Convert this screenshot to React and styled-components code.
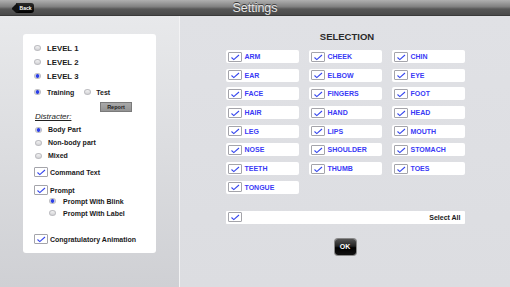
import React from "react";
import styled, { createGlobalStyle } from "styled-components";

const Global = createGlobalStyle`
  html, body { margin: 0; padding: 0; }
  body { font-family: "Liberation Sans", Arial, sans-serif; background: #dfe0e4; }
`;

const Page = styled.div`
  width: 510px;
  height: 287px;
  display: flex;
  flex-direction: column;
  overflow: hidden;
`;

const Header = styled.header`
  height: 16px;
  display: grid;
  grid-template-columns: 1fr auto 1fr;
  align-items: center;
  background: linear-gradient(#b0b0b0 0%, #808080 45%, #575757 60%, #4a4a4a 100%);
  border-bottom: 1px solid #3a3a3a;
  box-sizing: border-box;
`;

const BackButton = styled.div`
  position: relative;
  justify-self: start;
  margin-left: 16px;
  width: 18px;
  height: 10px;
  background: linear-gradient(#2a2a2a, #000);
  border-radius: 0 3px 3px 0;
  color: #fff;
  font-size: 5px;
  font-weight: bold;
  display: flex;
  align-items: center;
  justify-content: center;
  padding-left: 1px;
  box-sizing: border-box;
  &::before {
    content: "";
    position: absolute;
    left: -3px;
    top: 1.5px;
    width: 7px;
    height: 7px;
    background: #111;
    transform: rotate(45deg);
    border-radius: 1px;
    z-index: 0;
  }
  span { position: relative; z-index: 1; }
`;

const Title = styled.h1`
  margin: 0;
  font-size: 12.5px;
  font-weight: normal;
  color: #e8e8e8;
  text-shadow: 0 -1px 0 #333;
  line-height: 16px;
`;

const Main = styled.main`
  flex: 1;
  display: flex;
`;

const LeftPane = styled.section`
  width: 180px;
  box-sizing: border-box;
  padding: 18px 0 0 23px;
  background: linear-gradient(#e8e9eb, #cfd0d4);
  border-right: 1px solid #f3f3f4;
`;

const Card = styled.div`
  width: 133px;
  height: 219px;
  box-sizing: border-box;
  background: #fff;
  border-radius: 3px;
  padding: 7px 0 0 11px;
  display: flex;
  flex-direction: column;
`;

const Row = styled.div`
  display: flex;
  align-items: center;
  height: ${(p) => p.$h || 14}px;
  margin-top: ${(p) => p.$mt || 0}px;
  padding-left: ${(p) => p.$indent || 0}px;
  gap: ${(p) => p.$gap ?? 6}px;
`;

const Label = styled.span`
  font-size: ${(p) => p.$size || 7}px;
  font-weight: bold;
  color: #1a1a1a;
  white-space: nowrap;
`;

const RadioDot = styled.span`
  width: 7px;
  height: 6px;
  border-radius: 50%;
  box-sizing: border-box;
  border: 1px solid #bdbdc1;
  background: ${(p) =>
    p.$on
      ? "radial-gradient(circle, #2c3fe8 0 1.6px, #e8ecf8 2.2px)"
      : "linear-gradient(#f4f4f4, #d3d3d6)"};
  flex-shrink: 0;
`;

const ReportButton = styled.div`
  margin-left: 66px;
  width: 32px;
  height: 10px;
  box-sizing: border-box;
  background: linear-gradient(#a9a9a9, #939393);
  border: 1px solid #7a7a7a;
  font-size: 5.5px;
  font-weight: bold;
  color: #222;
  display: flex;
  align-items: center;
  justify-content: center;
`;

const Distracter = styled.span`
  font-size: 8px;
  font-style: italic;
  text-decoration: underline;
  color: #222;
`;

const BoxFrame = styled.span`
  width: 14px;
  height: 10px;
  box-sizing: border-box;
  border: 1px solid #a4a4aa;
  border-radius: 1px;
  background: #fff;
  display: flex;
  align-items: center;
  justify-content: center;
  flex-shrink: 0;
`;

const CheckBox = () => (
  <BoxFrame>
    <svg width="12" height="8" viewBox="0 0 12 8">
      <path d="M2.5 4.5 L4.8 6.6 L10 2" fill="none" stroke="#3344ee" strokeWidth="1.1" />
    </svg>
  </BoxFrame>
);

const RightPane = styled.section`
  flex: 1;
  display: flex;
  flex-direction: column;
  align-items: center;
  padding-top: 15px;
  background: linear-gradient(#e0e1e5, #dcdde1);
`;

const Heading = styled.h2`
  margin: 0;
  font-size: 9.5px;
  line-height: 12px;
  font-weight: bold;
  color: #2a2a2a;
  margin-left: 4px;
`;

const Grid = styled.div`
  margin-top: 7px;
  display: grid;
  grid-template-columns: repeat(3, 73px);
  grid-auto-rows: 13px;
  column-gap: 10px;
  row-gap: 5.7px;
`;

const Cell = styled.div`
  display: flex;
  align-items: center;
  gap: 3px;
  background: #fff;
  border-radius: 2px;
  padding-left: 2px;
`;

const CellText = styled.span`
  font-size: 7px;
  font-weight: bold;
  color: #3a3af6;
`;

const SelectAllRow = styled.div`
  margin-top: 17px;
  width: 239px;
  height: 13px;
  box-sizing: border-box;
  background: #fff;
  border-radius: 1px;
  display: flex;
  align-items: center;
  justify-content: space-between;
  padding: 0 4px 0 2px;
`;

const OkButton = styled.div`
  margin-top: 15px;
  width: 21px;
  height: 16px;
  border-radius: 3px;
  background: linear-gradient(#555 0%, #222 45%, #000 55%, #111 100%);
  box-shadow: 0 0 0 1px #888;
  color: #fff;
  font-size: 7px;
  font-weight: bold;
  display: flex;
  align-items: center;
  justify-content: center;
`;

const parts = [
  "ARM", "CHEEK", "CHIN",
  "EAR", "ELBOW", "EYE",
  "FACE", "FINGERS", "FOOT",
  "HAIR", "HAND", "HEAD",
  "LEG", "LIPS", "MOUTH",
  "NOSE", "SHOULDER", "STOMACH",
  "TEETH", "THUMB", "TOES",
  "TONGUE",
];

export default function App() {
  return (
    <Page>
      <Global />
      <Header>
        <BackButton><span>Back</span></BackButton>
        <Title>Settings</Title>
        <div />
      </Header>
      <Main>
        <LeftPane>
          <Card>
            <Row><RadioDot /><Label $size={7.8}>LEVEL 1</Label></Row>
            <Row><RadioDot /><Label $size={7.8}>LEVEL 2</Label></Row>
            <Row><RadioDot $on /><Label $size={7.8}>LEVEL 3</Label></Row>
            <Row $mt={2}>
              <RadioDot $on /><Label>Training</Label>
              <RadioDot style={{ marginLeft: 4 }} /><Label style={{ marginLeft: -1 }}>Test</Label>
            </Row>
            <Row $h={10} $mt={3}><ReportButton>Report</ReportButton></Row>
            <Row $h={8} $indent={1}><Distracter>Distracter:</Distracter></Row>
            <Row $h={13} $mt={3} $indent={1}><RadioDot $on /><Label>Body Part</Label></Row>
            <Row $h={13} $indent={1}><RadioDot /><Label>Non-body part</Label></Row>
            <Row $h={13} $indent={1}><RadioDot /><Label>Mixed</Label></Row>
            <Row $h={10} $mt={5} $gap={2}><CheckBox /><Label>Command Text</Label></Row>
            <Row $h={10} $mt={8} $gap={2}><CheckBox /><Label>Prompt</Label></Row>
            <Row $h={10} $mt={1} $indent={15} $gap={7}><RadioDot $on /><Label>Prompt With Blink</Label></Row>
            <Row $h={10} $mt={2} $indent={15} $gap={7}><RadioDot /><Label>Prompt With Label</Label></Row>
            <Row $h={10} $mt={16} $gap={2}><CheckBox /><Label>Congratulatory Animation</Label></Row>
          </Card>
        </LeftPane>
        <RightPane>
          <Heading>SELECTION</Heading>
          <Grid>
            {parts.map((p) => (
              <Cell key={p}>
                <CheckBox />
                <CellText>{p}</CellText>
              </Cell>
            ))}
          </Grid>
          <SelectAllRow>
            <CheckBox />
            <Label>Select All</Label>
          </SelectAllRow>
          <OkButton>OK</OkButton>
        </RightPane>
      </Main>
    </Page>
  );
}
